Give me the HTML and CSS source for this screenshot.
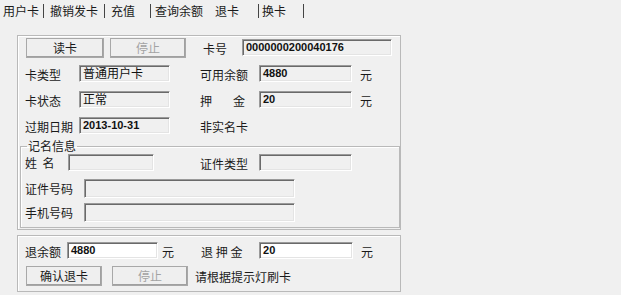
FILE: index.html
```html
<!DOCTYPE html>
<html>
<head>
<meta charset="utf-8">
<link rel="stylesheet" href="styles.css">
</head>
<body>
<div class="tabs">
  <span class="tab w40">用户卡</span><span class="sep"></span>
  <span class="tab w54">撤销发卡</span><span class="sep"></span>
  <span class="tab w39">充值</span><span class="sep sep-m"></span>
  <span class="tab w60">查询余额</span>
  <span class="tab w43">退卡</span><span class="sep sep-s"></span>
  <span class="tab w41">换卡</span><span class="sep"></span>
</div>

<div class="panel main">
  <div class="row r1">
    <button class="btn b78">读卡</button>
    <button class="btn b76 dis">停止</button>
    <span class="lbl cardno-l">卡号</span>
    <span class="fld cardno">0000000200040176</span>
  </div>
  <div class="row rr">
    <span class="lbl l54">卡类型</span>
    <span class="fld f91 cn">普通用户卡</span>
    <span class="lbl l59 ml30">可用余额</span>
    <span class="fld f93">4880</span>
    <span class="lbl yuan">元</span>
  </div>
  <div class="row rr">
    <span class="lbl l54">卡状态</span>
    <span class="fld f91 cn">正常</span>
    <span class="lbl l59 ml30 spread"><span>押</span><span>金</span></span>
    <span class="fld f93">20</span>
    <span class="lbl yuan">元</span>
  </div>
  <div class="row rr">
    <span class="lbl l54">过期日期</span>
    <span class="fld f91">2013-10-31</span>
    <span class="lbl ml30">非实名卡</span>
  </div>

  <fieldset class="group">
    <legend>记名信息</legend>
    <div class="row g1">
      <span class="lbl l43 name-l">姓&nbsp;&nbsp;名</span>
      <span class="fld f86"></span>
      <span class="lbl l59 ml46">证件类型</span>
      <span class="fld f93"></span>
    </div>
    <div class="row g2">
      <span class="lbl l59">证件号码</span>
      <span class="fld f211 tall"></span>
    </div>
    <div class="row g3">
      <span class="lbl l59">手机号码</span>
      <span class="fld f211 tall"></span>
    </div>
  </fieldset>
</div>

<div class="panel bottom">
  <div class="row b1">
    <span class="lbl l42">退余额</span>
    <span class="fld f91 white">4880</span>
    <span class="lbl yuan2">元</span>
    <span class="lbl l58 ml27">退&nbsp;押&nbsp;金</span>
    <span class="fld f94 white">20</span>
    <span class="lbl yuan">元</span>
  </div>
  <div class="row b2">
    <button class="btn b76 first">确认退卡</button>
    <button class="btn b76 dis">停止</button>
    <span class="lbl hint">请根据提示灯刷卡</span>
  </div>
</div>
</body>
</html>
```

FILE: styles.css
```css
* { box-sizing: border-box; }
html, body {
  margin: 0;
  padding: 0;
  background: #f0f0f0;
  width: 621px;
  height: 295px;
  overflow: hidden;
}
body {
  font-family: "Noto Sans CJK SC", "Noto Sans", sans-serif;
  font-size: 12px;
  color: #1a1a1a;
}

/* tabs */
.tabs {
  display: flex;
  align-items: center;
  height: 22px;
  padding-left: 3px;
}
.tab { display: block; line-height: 14px; white-space: nowrap; }
.w40 { width: 40px; }
.w54 { width: 54px; }
.w39 { width: 39px; }
.w60 { width: 60px; }
.w43 { width: 43px; }
.w41 { width: 41px; }
.sep {
  width: 1px;
  height: 14px;
  background: #444;
  margin-right: 6px;
}
.sep-m { margin-right: 4px; }
.sep-s { margin-right: 3px; }

/* panels */
.panel {
  margin-left: 17px;
  width: 384px;
  border: 1px solid #b9b9b9;
  box-shadow: inset 1px 1px 0 #ffffff;
}
.main {
  margin-top: 13px;
  height: 195px;
  padding: 2px 0 0 7px;
}
.bottom {
  margin-top: 5px;
  height: 57px;
  padding: 6px 0 0 7px;
}

.row { display: flex; align-items: flex-start; }
.r1 { height: 20px; }
.rr { margin-top: 7px; height: 17px; }
.rr + .rr { margin-top: 9px; }

.lbl { display: block; line-height: 16px; padding-top: 2px; white-space: nowrap; }
.l54 { width: 54px; }
.l59 { width: 59px; }
.l43 { width: 43px; }
.l42 { width: 42px; }
.l58 { width: 58px; }
.ml30 { margin-left: 30px; }
.ml46 { margin-left: 46px; }
.ml27 { margin-left: 27px; }
.yuan { margin-left: 8px; }
.yuan2 { margin-left: 4px; }
.spread { display: flex; justify-content: space-between; padding-right: 14px; }
.cardno-l { margin-left: 17px; width: 39px; padding-top: 3px; }

/* sunken fields */
.fld {
  display: block;
  height: 17px;
  border: 1px solid;
  border-color: #9a9a9a #ffffff #ffffff #9a9a9a;
  box-shadow: inset 1px 1px 0 #6a6a6a, inset -1px -1px 0 #e4e4e4;
  background: #f0f0f0;
  font-family: "Liberation Sans", Arial, sans-serif;
  font-weight: bold;
  font-size: 11px;
  line-height: 13px;
  padding: 1px 0 0 3px;
  color: #111;
  white-space: nowrap;
}
.fld.cn {
  font-family: "Noto Sans CJK SC", sans-serif;
  font-weight: normal;
  font-size: 12px;
  line-height: 13px;
  padding-top: 0;
}
.fld.white { background: #ffffff; }
.cardno { width: 150px; margin-top: 1px; }
.f91 { width: 91px; }
.f93 { width: 93px; }
.f94 { width: 94px; }
.f86 { width: 86px; }
.f211 { width: 211px; }
.tall { height: 19px; }

/* buttons */
.btn {
  display: block;
  height: 20px;
  margin: 0;
  padding: 0;
  font-family: "Noto Sans CJK SC", sans-serif;
  font-size: 12px;
  line-height: 16px;
  color: #1a1a1a;
  background: #efefef;
  border: 1px solid;
  border-color: #ffffff #6a6a6a #6a6a6a #ffffff;
  box-shadow: inset -1px -1px 0 #a0a0a0;
  outline: 1px solid #a8a8a8;
  outline-offset: -1px;
}
.b78 { width: 78px; margin-left: 1px; }
.b76 { width: 76px; }
.r1 .dis { margin-left: 6px; }
.b2 .first { margin-left: 1px; }
.b2 .dis { margin-left: 10px; }
.dis { color: #a3a3a3; }

/* group box */
.group {
  margin: 5px 0 0 -5px;
  padding: 0 0 0 4px;
  width: 380px;
  height: 89px;
  min-width: 0;
  border: 1px solid #b9b9b9;
  box-shadow: inset 1px 1px 0 #ffffff;
}
.group legend {
  padding: 0 1px;
  margin-left: 2px;
  font-size: 12px;
  line-height: 14px;
  height: 14px;
}
.g1 { height: 17px; margin-top: 1px; }
.name-l { padding-top: 1px; }
.g2 { margin-top: 8px; }
.g3 { margin-top: 5px; }

.b1 { height: 17px; }
.b2 { margin-top: 7px; }
.hint { margin-left: 7px; padding-top: 3px; }
```
